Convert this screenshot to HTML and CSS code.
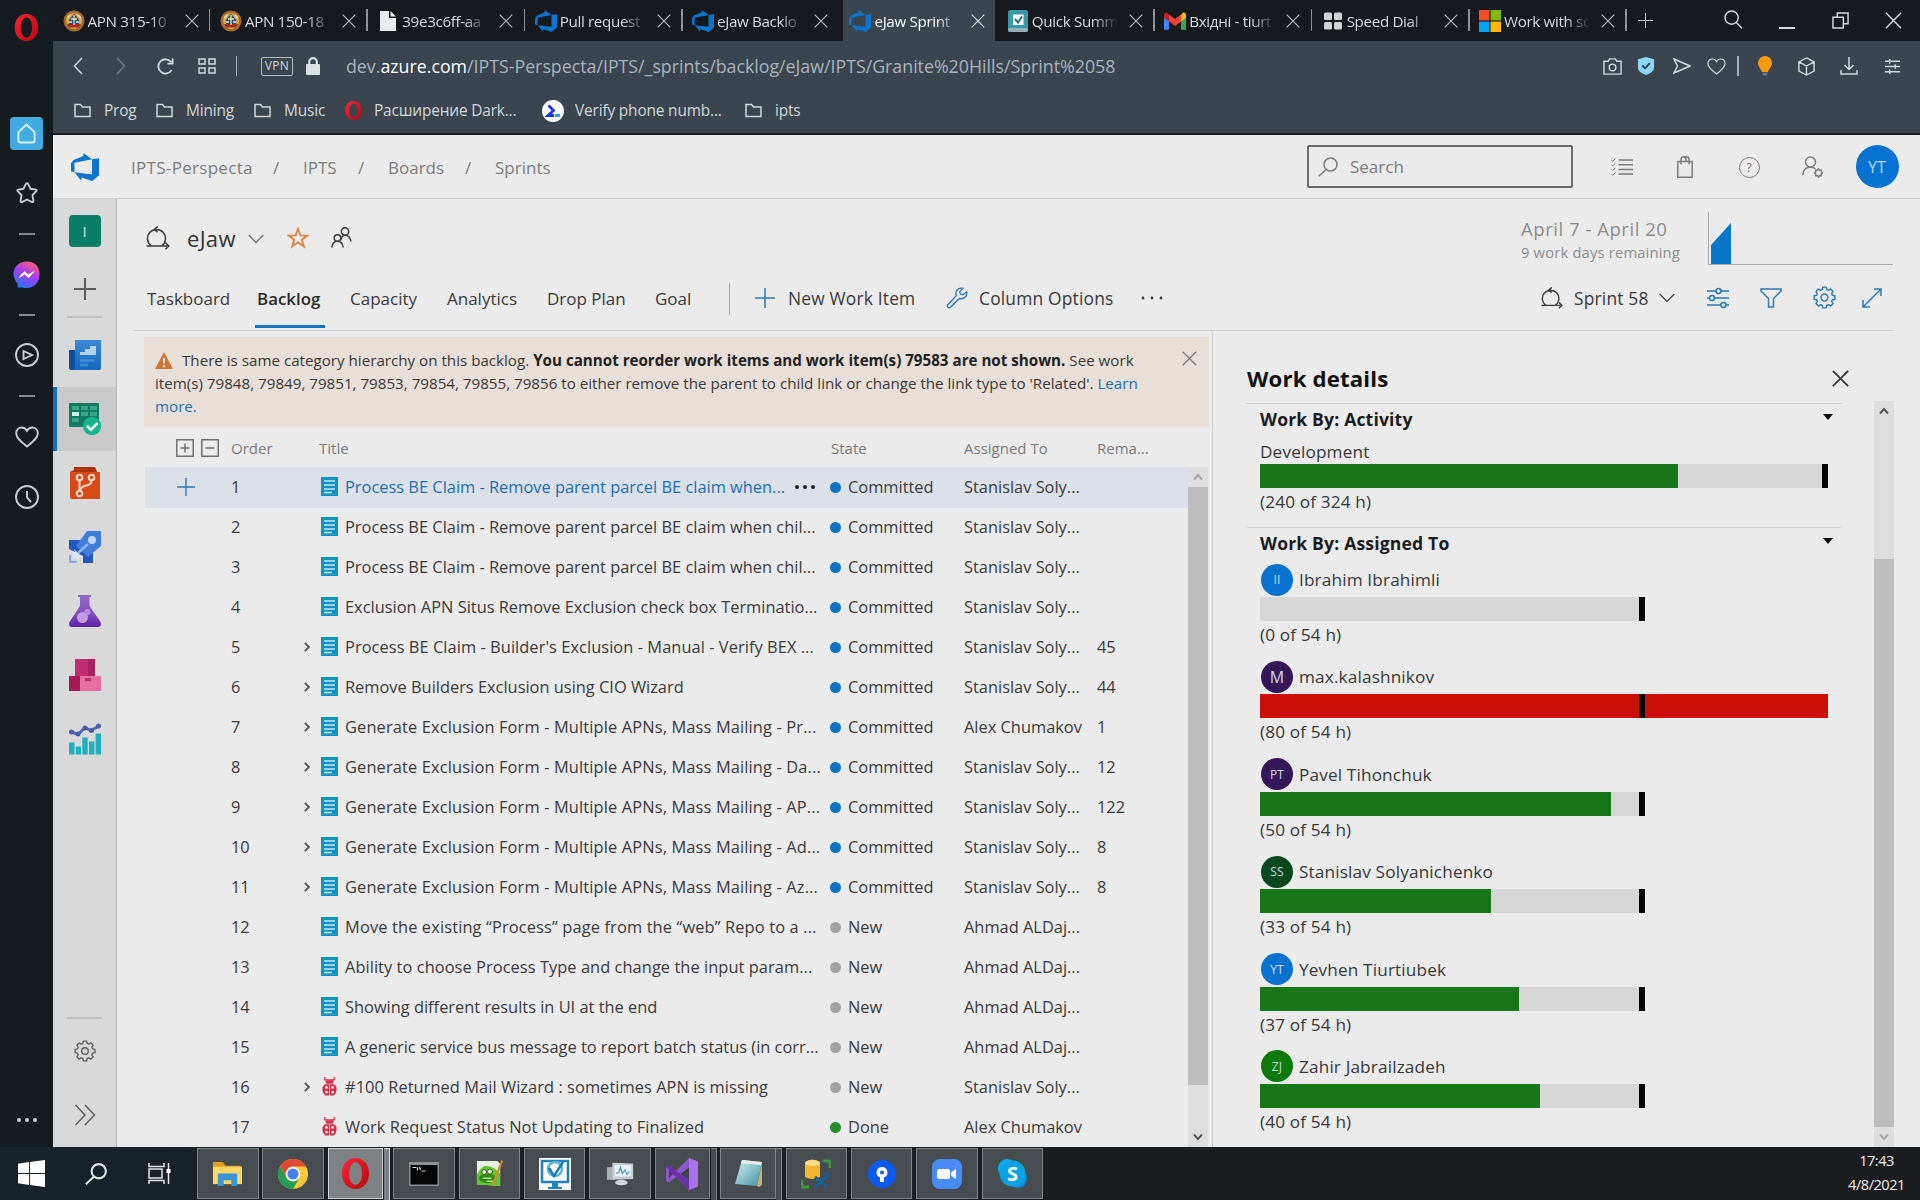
FILE: index.html
```html
<!DOCTYPE html>
<html lang="en">
<head>
<meta charset="utf-8">
<title>eJaw Sprint 58 - Backlog</title>
<link rel="stylesheet" href="styles.css">
</head>
<body>
<svg class="sprite" aria-hidden="true">
  <defs>
    <linearGradient id="g-msg" x1="0.7" y1="0" x2="0.2" y2="1"><stop offset="0" stop-color="#ff5f72"/><stop offset=".45" stop-color="#a63cf5"/><stop offset="1" stop-color="#1a7bff"/></linearGradient>
    <linearGradient id="g-opera" x1="0" y1="0" x2="1" y2="1"><stop offset="0" stop-color="#ff2534"/><stop offset="1" stop-color="#b30713"/></linearGradient>
    <linearGradient id="g-overview" x1="0" y1="0" x2="0" y2="1"><stop offset="0" stop-color="#3c8ad6"/><stop offset="1" stop-color="#1365bd"/></linearGradient>
    <linearGradient id="g-flask" x1="0" y1="0" x2="0" y2="1"><stop offset="0" stop-color="#9468c4"/><stop offset=".55" stop-color="#8250c4"/><stop offset="1" stop-color="#5b20a5"/></linearGradient>
    <linearGradient id="g-note" x1="0" y1="0" x2="1" y2="1"><stop offset="0" stop-color="#d5f1f5"/><stop offset="1" stop-color="#3f93a4"/></linearGradient>
    <symbol id="opera" viewBox="0 0 24 24"><path fill="url(#g-opera)" fill-rule="evenodd" d="M12 0C5.600 0 1.500 5.400 1.500 12S5.600 24 12 24 22.500 18.600 22.500 12 18.400 0 12 0zm0 3.200c3.100 0 5 3.900 5 8.800s-1.900 8.800-5 8.800S7 16.900 7 12s1.900-8.800 5-8.800z"/></symbol>
    <symbol id="devops" viewBox="0 0 24 24"><path fill="#0c74cc" d="M0 8.877L2.247 5.910l8.405-3.416V.022l7.370 5.393L2.966 8.338v8.225L0 15.707zm24-4.450v14.651l-5.753 4.900-9.303-3.057v3.056l-5.978-7.416 15.057 1.798V5.415z"/></symbol>
    <symbol id="x" viewBox="0 0 14 14"><path d="M.7.700l12.600 12.600M13.300.700L.7 13.300"/></symbol>
    <symbol id="plus" viewBox="0 0 20 20"><path d="M10 0v20M0 10h20"/></symbol>
    <symbol id="seal" viewBox="0 0 22 22"><circle cx="11" cy="11" r="10.500" fill="#a36b2c"/><circle cx="11" cy="11" r="8" fill="#d9a441"/><path d="M11 3.500l5 6.500v4H6v-4z" fill="#1f4d8e"/><path d="M4 14h14l-2 3.500H6z" fill="#a52c22"/><path d="M11 5v10M8 9h6M6 12h3M13 12h3" stroke="#f6e7a8" stroke-width="1.300"/><path d="M4 8l3-3M18 8l-3-3" stroke="#fff3c0" stroke-width="1.200"/></symbol>
    <symbol id="file" viewBox="0 0 18 22"><path d="M1 1h9v7h7v13H1z" fill="#e9ebed"/><path d="M11.500 1L17 6.600h-5.500z" fill="#e9ebed"/></symbol>
    <symbol id="folder" viewBox="0 0 17 14"><path d="M1 1h5.500l2 2.500H16V13H1z"/></symbol>
    <symbol id="home" viewBox="0 0 20 22"><path d="M1.500 9.500L10 1.500l8.500 8V18q0 2.500-2.500 2.500H4Q1.500 20.500 1.500 18z"/></symbol>
    <symbol id="star-r" viewBox="0 0 24 24"><path d="M12 2.200q.8 0 1.200.9l2.300 4.700 5.300.8q1.500.4.500 1.600l-3.800 3.900.9 5.800q0 1.600-1.400 1.100L12 18.500 7 21q-1.400.5-1.400-1.100l.9-5.800-3.800-3.900q-1-1.200.5-1.600l5.300-.8 2.300-4.700q.4-.9 1.200-.9z"/></symbol>
    <symbol id="messenger" viewBox="0 0 28 28"><path fill="url(#g-msg)" d="M14 .5C6.300.500.5 6 .5 13.500c0 4 1.600 7.400 4.300 9.800v4.200h4.700c1.400.4 2.900.5 4.500.5 7.700 0 13.500-5.500 13.500-14.300S21.700.500 14 .5z"/><path d="M6.500 17l5.200-6 4 3.600 5.800-3.600-5.200 6.200-4.100-3.700z" fill="#fff" stroke="#fff" stroke-width="1"/></symbol>
    <symbol id="play" viewBox="0 0 24 24"><circle cx="12" cy="12" r="11"/><path d="M8.500 8l8.500 4-8.500 4z"/></symbol>
    <symbol id="heart" viewBox="0 0 24 22"><path d="M12 20.500C7 16.500 1.200 12.500 1.200 7.300 1.200 3.700 3.700 1.500 6.700 1.500c2.300 0 4.200 1.200 5.300 3.300 1.100-2.100 3-3.300 5.300-3.300 3 0 5.500 2.200 5.500 5.800 0 5.200-5.800 9.200-10.800 13.200z"/></symbol>
    <symbol id="clock" viewBox="0 0 24 24"><circle cx="12" cy="12" r="11"/><path d="M12 6v6.500l4 4.500"/></symbol>
    <symbol id="dots" viewBox="0 0 22 6"><circle cx="3" cy="3" r="2"/><circle cx="11" cy="3" r="2"/><circle cx="19" cy="3" r="2"/></symbol>
    <symbol id="dots-s" viewBox="0 0 22 6"><circle cx="2" cy="3" r="1.400"/><circle cx="11" cy="3" r="1.400"/><circle cx="20" cy="3" r="1.400"/></symbol>
    <symbol id="left" viewBox="0 0 10 18"><path d="M9 1L1.500 9 9 17"/></symbol>
    <symbol id="right" viewBox="0 0 10 18"><path d="M1 1l7.500 8L1 17"/></symbol>
    <symbol id="reload" viewBox="0 0 18 20"><path d="M15.500 13.500A7.500 7.500 0 1 1 15 5.500M16.500 1.500v5.500H11"/></symbol>
    <symbol id="tiles" viewBox="0 0 18 16"><path d="M1 1h6v5H1zM11 1h6v5h-6zM1 10h6v5H1zM11 10h6v5h-6z"/></symbol>
    <symbol id="lock" viewBox="0 0 14 18"><rect x="0" y="7" width="14" height="11" rx="1" fill="#dde1e4"/><path d="M3.200 8V5a3.800 3.800 0 0 1 7.600 0v3" fill="none" stroke="#dde1e4" stroke-width="2.200"/></symbol>
    <symbol id="camera" viewBox="0 0 20 18"><path d="M1 3.500h4.500L7 1h6l1.500 2.500H19V17H1z"/><circle cx="10" cy="10" r="3.500"/></symbol>
    <symbol id="shield" viewBox="0 0 17 19"><path d="M8.500 0L17 2.500V11q0 5-8.500 8Q0 16 0 11V2.500z" fill="#8fd4fb"/><path d="M4.500 9l3 3 5-5.500" fill="none" stroke="#24445c" stroke-width="2"/></symbol>
    <symbol id="send" viewBox="0 0 18 16"><path d="M1 1l16 7-16 7 3.500-7z"/></symbol>
    <symbol id="bulb" viewBox="0 0 15 20"><path d="M7.500 0A7 7 0 0 1 14.500 7c0 4-3 5.500-4 9h-6C3.500 12.500.5 11 .5 7a7 7 0 0 1 7-7z" fill="#f89a0b"/><path d="M5 16.500h5v1.500L8.500 20h-2L5 18z" fill="#6a7480"/></symbol>
    <symbol id="cube" viewBox="0 0 18 20"><path d="M9 1l8 4.200v9.600L9 19l-8-4.200V5.200zM1 5.200l8 4.300 8-4.300M9 9.500V19"/></symbol>
    <symbol id="download" viewBox="0 0 18 18"><path d="M9 0v12M4.500 8L9 12.500 13.500 8M1 13v4h16v-4"/></symbol>
    <symbol id="tune" viewBox="0 0 18 16"><path d="M1 2.500h16M1 8h16M1 13.500h16M6 0v5M12 5.500v5M6 11v5"/></symbol>
    <symbol id="mag" viewBox="0 0 20 20"><circle cx="8" cy="8" r="7"/><path d="M13 13.200l6 6"/></symbol>
    <symbol id="maglight" viewBox="0 0 20 20"><circle cx="12.500" cy="7.500" r="6.500"/><path d="M8 12.500L.8 19.300"/></symbol>
    <symbol id="restore" viewBox="0 0 18 18"><path d="M1 5.500h11V17H1zM5.500 5V1H17v11.500h-4.500"/></symbol>
    <symbol id="gmail" viewBox="0 0 20 16"><path d="M0 2v14h4.500V7.500z" fill="#4285f4"/><path d="M20 2v14h-4.500V7.500z" fill="#34a853"/><path d="M15.500 2.500v6L20 5V2q-.5-2.500-3-1.500z" fill="#fbbc04"/><path d="M4.500 2.500v6L0 5V2Q.5-.5 3 .5z" fill="#c5221f"/><path d="M4.500 2l5.500 4.200L15.500 2v6.500L10 12.500 4.500 8.500z" fill="#ea4335"/></symbol>
    <symbol id="check-tile" viewBox="0 0 20 22"><rect width="20" height="22" rx="2.500" fill="#3b98a8"/><rect y="18" width="20" height="4" rx="2" fill="#8fb4ba"/><rect x="5" y="4.500" width="10.500" height="10.500" fill="#fff"/><path d="M7 9l3 3.500L14 6.500" fill="none" stroke="#246f80" stroke-width="2"/></symbol>
    <symbol id="dial" viewBox="0 0 18 17"><g fill="#d0d3d6"><rect width="8" height="7.500" rx="1.500"/><rect x="10" width="8" height="7.500" rx="1.500"/><rect y="9.500" width="8" height="7.500" rx="1.500"/><rect x="10" y="9.500" width="8" height="7.500" rx="1.500"/></g></symbol>
    <symbol id="ms" viewBox="0 0 20 20"><path d="M0 0h9.500v9.500H0z" fill="#f25022"/><path d="M10.500 0H20v9.500h-9.500z" fill="#7fba00"/><path d="M0 10.500h9.500V20H0z" fill="#00a4ef"/><path d="M10.500 10.500H20V20h-9.500z" fill="#ffb900"/></symbol>
    <symbol id="prompt" viewBox="0 0 22 22"><circle cx="11" cy="11" r="11" fill="#fff"/><path d="M6.500 5.500l5 5L6 15.500h6" fill="none" stroke="#1736e8" stroke-width="2.800"/><path d="M13 15.500h5" stroke="#18a0e8" stroke-width="2.800"/></symbol>
    <symbol id="gear" viewBox="-12 -12 24 24"><path stroke-linejoin="round" d="M8.200-2.400L10.800-1.800V1.800L8.200 2.400 7.500 4.100 8.910 6.360 6.360 8.910 4.100 7.500 2.400 8.200 1.800 10.800H-1.800L-2.400 8.200-4.100 7.500-6.360 8.910-8.910 6.360-7.500 4.100-8.200 2.400-10.800 1.800V-1.800L-8.200-2.400-7.500-4.100-8.910-6.360-6.360-8.910-4.100-7.500-2.400-8.200-1.800-10.800H1.800L2.400-8.200 4.100-7.500 6.360-8.910 8.910-6.360 7.500-4.100z"/><circle r="3.600"/></symbol>
    <symbol id="list" viewBox="0 0 22 18"><path d="M7.500 2H22M7.500 6.700H22M7.500 11.400H22M7.500 16H22"/><path stroke-width="1" d="M.5 2l1.200 1.200L4.500.600M.5 6.700l1.200 1.200L4.500 5.300M.5 11.400l1.200 1.200L4.500 10M.5 16l1.200 1.200 2.800-2.600"/></symbol>
    <symbol id="bag" viewBox="0 0 18 22"><path d="M1.800 5.500h14.400v15.700H1.800zM5 8.500V3.500Q5 .8 7.500.8T10 3.500v2M8.500.800h2Q13 .8 13 3.500v5"/></symbol>
    <symbol id="persongear" viewBox="0 0 22 22"><circle cx="8.500" cy="6" r="5"/><path d="M.8 19Q1.500 11 8.500 11q3 0 5 2"/><circle cx="16.500" cy="17" r="3.200"/><path stroke-width="1.300" d="M16.500 12v2M16.500 20v2M11.800 17h2M19.200 17h2M13.200 13.700l1.200 1.200M18.600 19.100l1.200 1.200M13.200 20.300l1.200-1.200M18.600 14.900l1.200-1.200"/></symbol>
    <symbol id="sprint" viewBox="0 0 24 24"><path d="M5.500 20A9 9 0 1 1 15.500 20M.5 20h21M19.500 16.800l3.300 3.200-3.300 3.200M11.800.500l-3.300 2.700 3 3"/></symbol>
    <symbol id="down" viewBox="0 0 16 10"><path d="M.7 1L8 8.500 15.300 1"/></symbol>
    <symbol id="star" viewBox="0 0 22 22"><path d="M11 2l2.300 6.400 6.900.2-5.400 4.200 2 6.600L11 15.500l-5.800 3.900 2-6.600-5.400-4.200 6.900-.2z"/></symbol>
    <symbol id="people" viewBox="0 0 21 21"><circle cx="14" cy="4.500" r="3.700"/><path d="M10 12.500Q11 8.200 14 8.200q5 0 6 6.300"/><circle cx="6.500" cy="11" r="3.300"/><path d="M.8 20.500Q1.500 14.300 6.500 14.300t5.700 6.200"/></symbol>
    <symbol id="wrench" viewBox="0 0 24 24"><path d="M22.500 5.500l-4 3-2.800-.8L15 5l3.500-3.500Q14.500.500 12 3.500q-2 2.700-.7 6L2 19.300q-1 1.700.3 2.700 1.300 1.300 2.700 0l9.500-9.500q4 1 6.500-1.500 2.300-2.500 1.500-5.500z"/></symbol>
    <symbol id="sliders" viewBox="0 0 22 20"><path d="M0 3h9M14 3h8M0 10h2.500M7.500 10H22M0 17h14M19 17h3"/><circle cx="11.500" cy="3" r="2.500"/><circle cx="5" cy="10" r="2.500"/><circle cx="16.500" cy="17" r="2.500"/></symbol>
    <symbol id="funnel" viewBox="0 0 22 20"><path d="M1 1h20v2l-7.500 7.500V19h-5v-8.500L1 3z"/></symbol>
    <symbol id="expand" viewBox="0 0 20 20"><path d="M1 19L19 1M12 1h7v7M1 12v7h7"/></symbol>
    <symbol id="warn" viewBox="0 0 18 17"><path d="M9 0l9 17H0z" fill="#cf7736"/><path d="M9 6v5.500M9 13.200v2" stroke="#f1e6dc" stroke-width="2"/></symbol>
    <symbol id="pbi" viewBox="0 0 17 19"><path d="M0 0h17v19H0z" fill="#0f92bd"/><path d="M3 4h11M3 8h11M3 12h11M3 15.500h8" stroke="#c4e8f2" stroke-width="1.300"/></symbol>
    <symbol id="bug" viewBox="0 0 16 20"><path d="M3 0v3h10V0" fill="none" stroke="#d23049" stroke-width="1.400"/><path d="M4 3.500h8V7H4z" fill="#d23049"/><path d="M3 7.500h10q2.500 2 2.500 5.500 0 4-3 6.500h-9Q.5 17 .5 13 .5 9.500 3 7.500z" fill="#d23049"/><path d="M8 8v12" stroke="#ebebeb" stroke-width="1"/><g fill="#ebebeb"><circle cx="4.800" cy="11" r="1.400"/><circle cx="11.200" cy="11" r="1.400"/><circle cx="4.800" cy="16" r="1.400"/><circle cx="11.200" cy="16" r="1.400"/></g></symbol>
    <symbol id="twist" viewBox="0 0 6 10"><path d="M.8.800L5 5 .8 9.200"/></symbol>
    <symbol id="boxplus" viewBox="0 0 18 18"><path d="M.8.800h16.400v16.400H.8zM9 4.500v9M4.500 9h9"/></symbol>
    <symbol id="boxminus" viewBox="0 0 18 18"><path d="M.8.800h16.400v16.400H.8zM4.500 9h9"/></symbol>
    <symbol id="up" viewBox="0 0 10 8"><path d="M1 6.500l4-4.500 4 4.500"/></symbol>
    <symbol id="dn" viewBox="0 0 10 8"><path d="M1 1.500L5 6l4-4.500"/></symbol>
    <symbol id="overview" viewBox="0 0 32 30"><path d="M0 10h8v20H2Q0 30 0 28z" fill="#0d5099"/><path d="M6 0h26v28q0 2-2 2H3q3 0 3-3z" fill="url(#g-overview)"/><path d="M11 15v-3h5V9h5V6h6v9z" fill="#b4d3f1"/><path d="M11 20.500h14M11 25h8" stroke="#3f8ad4" stroke-width="2.500"/></symbol>
    <symbol id="boards" viewBox="0 0 32 32"><path d="M0 0h30v22q0 2-2 2H2q-2 0-2-2z" fill="#117a61"/><g fill="#3ba687"><path d="M3 3h7v4H3zM12 3h7v4h-7zM21 3h7v4h-7zM12 9h7v4h-7zM21 9h7v4h-7zM3 15h7v4H3z"/></g><path d="M3 9h7v4H3z" fill="#d1f3e7"/><circle cx="23" cy="23" r="9.200" fill="#18b68d"/><path d="M18 23l4 3.800 6.500-6.600" fill="none" stroke="#fff" stroke-width="2.500"/></symbol>
    <symbol id="repos" viewBox="0 0 30 32"><path d="M4 0h21l2 5h3H0l4-2z" fill="#a8330c"/><path d="M0 5h30v27H2q-2 0-2-2z" fill="#d84a17"/><g fill="none" stroke="#ffd9c7" stroke-width="2"><circle cx="9.500" cy="10.500" r="2.800"/><circle cx="21.500" cy="10.500" r="2.800"/><circle cx="9.500" cy="26.500" r="2.800"/><path d="M9.500 13.500v10.500M21.500 13.500q0 4-5 5t-7 5"/></g></symbol>
    <symbol id="pipelines" viewBox="0 0 32 32"><path d="M0 9h12l12 11v12H14v-7L0 18z" fill="#2457bd"/><path d="M18 0h14v15L19 26 7 15z" fill="#3f7ddd"/><circle cx="23" cy="9" r="4" fill="#c2d6f6"/><path d="M9 22L19 13" stroke="#8db3ef" stroke-width="2.500"/><path d="M5 18l9 9-4-1-1 3-3-3-3 1 2-3-3-3 4 0z" fill="#dce7f8"/><path d="M1 24v7h7" fill="none" stroke="#8ba8e3" stroke-width="2.500"/></symbol>
    <symbol id="flask" viewBox="0 0 32 32"><path d="M9 0h13v2h-1.500v9L31.500 27q1.500 5-3 5h-25Q-1 32 .5 27l10.500-16V2H9z" fill="url(#g-flask)"/><circle cx="13.500" cy="22.500" r="5.500" fill="#c59de6"/><circle cx="18.500" cy="17" r="3" fill="#b88be0"/></symbol>
    <symbol id="artifacts" viewBox="0 0 32 32"><path d="M6 0h20v17H6z" fill="#c02d74"/><path d="M19 0h7v17h-7z" fill="#ab2063"/><path d="M0 17h11v15H0z" fill="#a81857"/><path d="M11 17h21v15H11z" fill="#e5709f"/><path d="M16 19h6v3h-6z" fill="#b73372"/></symbol>
    <symbol id="analytics" viewBox="0 0 32 31"><g fill="#1fb0bd"><path d="M0 19h5.500v12H0zM6.700 23H12v8H6.700zM13.300 14h5.400v17h-5.400zM20 18h5.400v13H20zM26.600 10H32v21h-5.400z"/></g><path d="M1.500 8l7.500 3 7-7 6 3 8.500-5" fill="none" stroke="#5168b4" stroke-width="3"/><g fill="#4a5ca6"><circle cx="2.500" cy="8.500" r="2.500"/><circle cx="9" cy="10.500" r="2.500"/><circle cx="16" cy="4.500" r="2.500"/><circle cx="22.500" cy="7" r="2.500"/><circle cx="29.500" cy="2.500" r="2.500"/></g></symbol>
    <symbol id="chevrons" viewBox="0 0 22 22"><path d="M1.500 1l9.500 10-9.500 10M11 1l9.500 10L11 21"/></symbol>
    <symbol id="win" viewBox="0 0 28 28"><path fill="#fff" d="M0 4l11.500-1.800v11.300H0zM12.500 2L28 0v13.500H12.500zM0 14.500h11.500v11.300L0 24.200zM12.500 14.500H28V28l-15.500-2z"/></symbol>
    <symbol id="taskview" viewBox="0 0 23 21"><path d="M1 0v3.500h15V0M1 21v-3.500h15V21M1 6h13v9H1zM20.500 0v21"/><path fill="#fff" d="M18.500 6h4v4h-4z" stroke="none"/></symbol>
    <symbol id="explorer" viewBox="0 0 32 28"><path d="M1 2h10l3 4h16v18H1z" fill="#e0a020"/><path d="M1 7h30v18H1z" fill="#fbd766"/><path d="M7 14h18q1 0 1 1v12h-6v-6h-8v6H6V15q0-1 1-1z" fill="#3994d8"/></symbol>
    <symbol id="chrome" viewBox="0 0 30 30"><circle cx="15" cy="15" r="15" fill="#fcc934"/><path d="M2 7.500A15 15 0 0 1 28 7.500H15a7.500 7.500 0 0 0-6.500 11.200z" fill="#e0483a"/><path d="M2 7.500A15 15 0 0 0 15 30l6.500-11.300A7.500 7.500 0 0 1 8.500 18.700z" fill="#219c52"/><circle cx="15" cy="15" r="7.200" fill="#fff"/><circle cx="15" cy="15" r="5.600" fill="#4380ea"/></symbol>
    <symbol id="cmd" viewBox="0 0 30 24"><path d="M0 0h30v24H0z" fill="#8b9092"/><path d="M1.500 3h27v19.500h-27z" fill="#050505"/><path d="M3.500 5.500h4M8.500 5.500v3M10.500 5l1 3M12.500 9h4" stroke="#ddd" stroke-width="1.200"/></symbol>
    <symbol id="npp" viewBox="0 0 30 30"><path d="M2 2h21l3 3v23L2 26z" fill="#e8f0e0"/><path d="M2 16q5-9 10-9 8 1 14 8v13L2 26z" fill="#63c52e"/><ellipse cx="13" cy="20" rx="9" ry="5" fill="#2f8a18"/><circle cx="9.500" cy="13.500" r="2.600" fill="#dfe8d2" stroke="#2b6b18"/><circle cx="15.500" cy="13" r="2.600" fill="#dfe8d2" stroke="#2b6b18"/><path d="M8 20h9M12 23h8" stroke="#a5e57c" stroke-width="1.500"/><path d="M29 2L20 26l-2 2 0-3L27 1z" fill="#d68a31"/></symbol>
    <symbol id="monitorcheck" viewBox="0 0 32 32"><path d="M0 0h32v32H0z" fill="#fff"/><path d="M3 3h26v21H3z" fill="none" stroke="#2184b7" stroke-width="2.600"/><circle cx="16" cy="11" r="7" fill="none" stroke="#57b4dc" stroke-width="2.500"/><path d="M10 10l5 8 9-14" fill="none" stroke="#1d7db3" stroke-width="2.500"/><path d="M13 24h6v5h4v2H9v-2h4z" fill="#2184b7"/></symbol>
    <symbol id="sysmon" viewBox="0 0 32 26"><path d="M1 6h9v14H1z" fill="#aab0b4"/><path d="M7 1l23 1v17l-23 1z" fill="#c7cccf"/><path d="M9.500 3.500l18 .5v12l-18 .5z" fill="#eaf3fa"/><path d="M11 13l3-1 2-6 2 7 3-4 2 5 3-3" fill="none" stroke="#4f94c9" stroke-width="1.300"/><ellipse cx="17" cy="23" rx="7" ry="3" fill="#d5d8da"/></symbol>
    <symbol id="vs" viewBox="0 0 32 32"><path d="M23 0l9 3.500v25L23 32 10 19l-7 5.500L0 23V9l3-1.500 7 5.500z" fill="#9256cf"/><path d="M3 12v8l4-4zM23 9.500v13L14.500 16z" fill="#41434a"/><path d="M23 0l9 3.500v25L23 32z" fill="#a873ea"/><path d="M0 9l3-1.500 7 5.500 4.500 3 8.500 6.500V32L10 19z" fill="#6b31ab"/></symbol>
    <symbol id="notepad" viewBox="0 0 28 28"><path d="M8 0l20 2-5 24-22-2z" fill="url(#g-note)"/><path d="M8 0l20 2-.7 3L7 3z" fill="#e8edee"/><path d="M28 3v22l-3 2-2-1z" fill="#cfae73"/></symbol>
    <symbol id="dbtool" viewBox="0 0 30 30"><path d="M4 3q7-5 15 0v15q-8 4-15 0z" fill="#f4b62c"/><ellipse cx="11.500" cy="4" rx="7.500" ry="3" fill="#ffe08a"/><path d="M22 2h7v7M8 28H1v-7" fill="none" stroke="#3d9a43" stroke-width="2.800"/><path d="M14 28l12-11M14 18l12 10M24 14l5 4" stroke="#1f5f94" stroke-width="3"/></symbol>
    <symbol id="sourcetree" viewBox="0 0 28 28"><circle cx="14" cy="14" r="14" fill="#0b58f2"/><path d="M14 7a5.500 5.500 0 0 1 2 10.600V22h-4v-4.400A5.500 5.500 0 0 1 14 7z" fill="#fff"/><circle cx="14" cy="12.500" r="2" fill="#0b58f2"/></symbol>
    <symbol id="zoomapp" viewBox="0 0 30 30"><rect width="30" height="30" rx="8" fill="#4a8cf7"/><rect x="5" y="10" width="13" height="10" rx="2.500" fill="#fff"/><path d="M19 13.500l5-3.500v10l-5-3.500z" fill="#fff"/></symbol>
    <symbol id="skype" viewBox="0 0 28 28"><circle cx="9" cy="9" r="9" fill="#00aff0"/><circle cx="19" cy="19" r="9" fill="#0a8fd8"/><circle cx="14" cy="14" r="12.500" fill="#08a1e3"/></symbol>
  </defs>
</svg>

<div class="desktop">
  <div class="browser">
    <aside class="opera-bar">
      <svg class="logo26"><use href="#opera"/></svg>
      <span></span>
      <span class="home-tile"><svg class="line w2 home-ico"><use href="#home"/></svg></span>
      <svg class="line w2 s24"><use href="#star-r"/></svg>
      <i class="dash"></i>
      <svg class="s27"><use href="#messenger"/></svg>
      <i class="dash"></i>
      <svg class="line w2 s24"><use href="#play"/></svg>
      <i class="dash"></i>
      <svg class="line w2 s24"><use href="#heart"/></svg>
      <svg class="line w2 s24"><use href="#clock"/></svg>
      <span></span>
      <svg class="solid dots22"><use href="#dots"/></svg>
    </aside>

    <div class="window">
      <div class="tabstrip">
        <div class="tab"><svg class="fav"><use href="#seal"/></svg><span>APN 315-10</span><svg class="line tx"><use href="#x"/></svg></div>
        <div class="tab"><svg class="fav"><use href="#seal"/></svg><span>APN 150-18</span><svg class="line tx"><use href="#x"/></svg></div>
        <div class="tab"><svg class="fav"><use href="#file"/></svg><span>39e3c6ff-aa</span><svg class="line tx"><use href="#x"/></svg></div>
        <div class="tab"><svg class="fav"><use href="#devops"/></svg><span>Pull request</span><svg class="line tx"><use href="#x"/></svg></div>
        <div class="tab nosep"><svg class="fav"><use href="#devops"/></svg><span>eJaw Backlo</span><svg class="line tx"><use href="#x"/></svg></div>
        <div class="tab active"><svg class="fav"><use href="#devops"/></svg><span>eJaw Sprint</span><svg class="line tx"><use href="#x"/></svg></div>
        <div class="tab"><svg class="fav"><use href="#check-tile"/></svg><span>Quick Summ</span><svg class="line tx"><use href="#x"/></svg></div>
        <div class="tab"><svg class="fav"><use href="#gmail"/></svg><span>Вхідні - tiurt</span><svg class="line tx"><use href="#x"/></svg></div>
        <div class="tab"><svg class="fav dialfav"><use href="#dial"/></svg><span>Speed Dial</span><svg class="line tx"><use href="#x"/></svg></div>
        <div class="tab"><svg class="fav"><use href="#ms"/></svg><span>Work with so</span><svg class="line tx"><use href="#x"/></svg></div>
        <div class="win-btns">
          <svg class="line s14"><use href="#plus"/></svg>
          <svg class="line w15 s19 find"><use href="#mag"/></svg>
          <i class="min"></i>
          <svg class="line w15 s17"><use href="#restore"/></svg>
          <svg class="line s16"><use href="#x"/></svg>
        </div>
      </div>

      <div class="toolbar">
        <div class="address">
          <svg class="line w15 nav"><use href="#left"/></svg>
          <svg class="line w15 nav dim"><use href="#right"/></svg>
          <svg class="line w2 s19"><use href="#reload"/></svg>
          <svg class="line w15 s18"><use href="#tiles"/></svg>
          <i class="vbar"></i>
          <b class="vpn">VPN</b>
          <svg class="s18"><use href="#lock"/></svg>
          <div class="url">dev.<em>azure.com</em>/IPTS-Perspecta/IPTS/_sprints/backlog/eJaw/IPTS/Granite%20Hills/Sprint%2058</div>
          <svg class="line w15 s19"><use href="#camera"/></svg>
          <svg class="s18"><use href="#shield"/></svg>
          <svg class="line w15 s18"><use href="#send"/></svg>
          <svg class="line w15 s19"><use href="#heart"/></svg>
          <i class="vbar"></i>
          <svg class="s20"><use href="#bulb"/></svg>
          <svg class="line w15 s19"><use href="#cube"/></svg>
          <svg class="line w15 s18"><use href="#download"/></svg>
          <svg class="line w15 s17"><use href="#tune"/></svg>
        </div>
        <div class="bookmarks">
          <svg class="line w15 s17"><use href="#folder"/></svg><span>Prog</span>
          <svg class="line w15 s17"><use href="#folder"/></svg><span>Mining</span>
          <svg class="line w15 s17"><use href="#folder"/></svg><span>Music</span>
          <svg class="s19"><use href="#opera"/></svg><span>Расширение Dark...</span>
          <svg class="s22"><use href="#prompt"/></svg><span>Verify phone numb...</span>
          <svg class="line w15 s17"><use href="#folder"/></svg><span>ipts</span>
        </div>
      </div>

      <div class="page">
        <header class="az-header">
          <svg class="s28"><use href="#devops"/></svg>
          <span>IPTS-Perspecta</span><span>/</span><span>IPTS</span><span>/</span><span>Boards</span><span>/</span><span>Sprints</span>
          <div class="search"><svg class="line w15 s20"><use href="#maglight"/></svg>Search</div>
          <span></span>
          <svg class="line w15 hi s22"><use href="#list"/></svg>
          <svg class="line w15 hi s22"><use href="#bag"/></svg>
          <span class="help">?</span>
          <svg class="line w15 hi s22"><use href="#persongear"/></svg>
          <span class="me">YT</span>
        </header>

        <div class="body">
          <nav class="rail">
            <div class="slot"><span class="proj">I</span></div>
            <div class="slot add"><svg class="line w2 s22"><use href="#plus"/></svg></div>
            <div class="rule"></div>
            <div class="slot"><svg class="s32"><use href="#overview"/></svg></div>
            <div class="slot on"><svg class="s32"><use href="#boards"/></svg></div>
            <div class="slot"><svg class="s32"><use href="#repos"/></svg></div>
            <div class="slot"><svg class="s32"><use href="#pipelines"/></svg></div>
            <div class="slot"><svg class="s32"><use href="#flask"/></svg></div>
            <div class="slot"><svg class="s32"><use href="#artifacts"/></svg></div>
            <div class="slot"><svg class="s32"><use href="#analytics"/></svg></div>
            <div class="grow"></div>
            <div class="rule end"></div>
            <div class="slot"><svg class="line w15 s22"><use href="#gear"/></svg></div>
            <div class="slot"><svg class="line w15 s22"><use href="#chevrons"/></svg></div>
          </nav>

          <main class="hub">
            <div class="title-row">
              <svg class="line w15 s24"><use href="#sprint"/></svg>
              <h1>eJaw</h1>
              <svg class="line w15 chev"><use href="#down"/></svg>
              <svg class="line w2 orange s22"><use href="#star"/></svg>
              <svg class="line w15 s21"><use href="#people"/></svg>
              <div class="dates"><strong>April 7 - April 20</strong><small>9 work days remaining</small></div>
              <svg class="burn" viewBox="0 0 185 54"><path d="M.5 0v52.500H185" fill="none" stroke="#a9a9a9"/><path d="M3 33L23 11v41H3z" fill="#0a76c8"/></svg>
            </div>
            <div class="command-row">
              <span>Taskboard</span><span class="current">Backlog</span><span>Capacity</span><span>Analytics</span><span>Drop Plan</span><span>Goal</span>
              <i class="split"></i>
              <svg class="line blue w15 s20"><use href="#plus"/></svg><span class="cmd">New Work Item</span>
              <svg class="line blue w15 s22"><use href="#wrench"/></svg><span class="cmd">Column Options</span>
              <svg class="solid dots22"><use href="#dots-s"/></svg>
              <svg class="line w15 s22"><use href="#sprint"/></svg><span class="cmd">Sprint 58</span>
              <svg class="line chev"><use href="#down"/></svg>
              <svg class="line blue w15 s22"><use href="#sliders"/></svg>
              <svg class="line blue w15 s22"><use href="#funnel"/></svg>
              <svg class="line blue w15 s23"><use href="#gear"/></svg>
              <svg class="line blue w15 s20"><use href="#expand"/></svg>
            </div>

            <div class="split-view">
              <section class="backlog">
                <div class="warning">
                  <p><svg class="warn-ico"><use href="#warn"/></svg>There is same category hierarchy on this backlog. <b>You cannot reorder work items and work item(s) 79583 are not shown.</b> See work<br>item(s) 79848, 79849, 79851, 79853, 79854, 79855, 79856 to either remove the parent to child link or change the link type to 'Related'. <a>Learn</a><br><a>more.</a></p>
                  <svg class="line s15"><use href="#x"/></svg>
                </div>
                <div class="cols">
                  <span class="tog"><svg class="line w15 s18"><use href="#boxplus"/></svg><svg class="line w15 s18"><use href="#boxminus"/></svg></span>
                  <span>Order</span><span>Title</span><span>State</span><span>Assigned To</span><span>Rema...</span>
                </div>
                <div class="grid">
                  <div class="rows">
                    <div class="row sel"><svg class="line blue w15 add18"><use href="#plus"/></svg><span>1</span><i></i><svg class="wi"><use href="#pbi"/></svg><span class="t">Process BE Claim - Remove parent parcel BE claim when...<svg class="solid more"><use href="#dots"/></svg></span><span class="st committed">Committed</span><span>Stanislav Soly...</span><span></span></div>
                    <div class="row"><i></i><span>2</span><i></i><svg class="wi"><use href="#pbi"/></svg><span class="t">Process BE Claim - Remove parent parcel BE claim when chil...</span><span class="st committed">Committed</span><span>Stanislav Soly...</span><span></span></div>
                    <div class="row"><i></i><span>3</span><i></i><svg class="wi"><use href="#pbi"/></svg><span class="t">Process BE Claim - Remove parent parcel BE claim when chil...</span><span class="st committed">Committed</span><span>Stanislav Soly...</span><span></span></div>
                    <div class="row"><i></i><span>4</span><i></i><svg class="wi"><use href="#pbi"/></svg><span class="t">Exclusion APN Situs Remove Exclusion check box Terminatio...</span><span class="st committed">Committed</span><span>Stanislav Soly...</span><span></span></div>
                    <div class="row"><i></i><span>5</span><svg class="line w2 tw"><use href="#twist"/></svg><svg class="wi"><use href="#pbi"/></svg><span class="t mid">Process BE Claim - Builder's Exclusion - Manual - Verify BEX ...</span><span class="st committed">Committed</span><span>Stanislav Soly...</span><span>45</span></div>
                    <div class="row"><i></i><span>6</span><svg class="line w2 tw"><use href="#twist"/></svg><svg class="wi"><use href="#pbi"/></svg><span class="t">Remove Builders Exclusion using CIO Wizard</span><span class="st committed">Committed</span><span>Stanislav Soly...</span><span>44</span></div>
                    <div class="row"><i></i><span>7</span><svg class="line w2 tw"><use href="#twist"/></svg><svg class="wi"><use href="#pbi"/></svg><span class="t wide">Generate Exclusion Form - Multiple APNs, Mass Mailing - Pr...</span><span class="st committed">Committed</span><span>Alex Chumakov</span><span>1</span></div>
                    <div class="row"><i></i><span>8</span><svg class="line w2 tw"><use href="#twist"/></svg><svg class="wi"><use href="#pbi"/></svg><span class="t wide">Generate Exclusion Form - Multiple APNs, Mass Mailing - Da...</span><span class="st committed">Committed</span><span>Stanislav Soly...</span><span>12</span></div>
                    <div class="row"><i></i><span>9</span><svg class="line w2 tw"><use href="#twist"/></svg><svg class="wi"><use href="#pbi"/></svg><span class="t wide">Generate Exclusion Form - Multiple APNs, Mass Mailing - AP...</span><span class="st committed">Committed</span><span>Stanislav Soly...</span><span>122</span></div>
                    <div class="row"><i></i><span>10</span><svg class="line w2 tw"><use href="#twist"/></svg><svg class="wi"><use href="#pbi"/></svg><span class="t wide">Generate Exclusion Form - Multiple APNs, Mass Mailing - Ad...</span><span class="st committed">Committed</span><span>Stanislav Soly...</span><span>8</span></div>
                    <div class="row"><i></i><span>11</span><svg class="line w2 tw"><use href="#twist"/></svg><svg class="wi"><use href="#pbi"/></svg><span class="t wide">Generate Exclusion Form - Multiple APNs, Mass Mailing - Az...</span><span class="st committed">Committed</span><span>Stanislav Soly...</span><span>8</span></div>
                    <div class="row"><i></i><span>12</span><i></i><svg class="wi"><use href="#pbi"/></svg><span class="t wide">Move the existing “Process” page from the “web” Repo to a ...</span><span class="st">New</span><span>Ahmad ALDaj...</span><span></span></div>
                    <div class="row"><i></i><span>13</span><i></i><svg class="wi"><use href="#pbi"/></svg><span class="t mid">Ability to choose Process Type and change the input param...</span><span class="st">New</span><span>Ahmad ALDaj...</span><span></span></div>
                    <div class="row"><i></i><span>14</span><i></i><svg class="wi"><use href="#pbi"/></svg><span class="t">Showing different results in UI at the end</span><span class="st">New</span><span>Ahmad ALDaj...</span><span></span></div>
                    <div class="row"><i></i><span>15</span><i></i><svg class="wi"><use href="#pbi"/></svg><span class="t">A generic service bus message to report batch status (in corr...</span><span class="st">New</span><span>Ahmad ALDaj...</span><span></span></div>
                    <div class="row"><i></i><span>16</span><svg class="line w2 tw"><use href="#twist"/></svg><svg class="wi"><use href="#bug"/></svg><span class="t mid">#100 Returned Mail Wizard : sometimes APN is missing</span><span class="st">New</span><span>Stanislav Soly...</span><span></span></div>
                    <div class="row"><i></i><span>17</span><i></i><svg class="wi"><use href="#bug"/></svg><span class="t mid">Work Request Status Not Updating to Finalized</span><span class="st done">Done</span><span>Alex Chumakov</span><span></span></div>
                  </div>
                  <div class="scroll"><svg class="line w2 arr faint"><use href="#up"/></svg><i class="thumb-a"></i><svg class="line w2 arr bottom"><use href="#dn"/></svg></div>
                </div>
              </section>

              <aside class="details">
                <div class="details-head"><h2>Work details</h2><svg class="line w15 s17"><use href="#x"/></svg></div>
                <div class="details-body">
                  <div class="groups">
                    <section class="group first">
                      <h3>Work By: Activity<i class="caret"></i></h3>
                      <div class="label">Development</div>
                      <div class="bar" style="width:568px"><i class="ok" style="width:417.500px"></i><i class="cap" style="left:562px"></i></div>
                      <div class="hours">(240 of 324 h)</div>
                    </section>
                    <section class="group">
                      <h3>Work By: Assigned To<i class="caret"></i></h3>
                      <div class="person"><div class="who"><b class="c-blue">II</b>Ibrahim Ibrahimli</div><div class="bar"><i class="cap"></i></div><div class="hours">(0 of 54 h)</div></div>
                      <div class="person"><div class="who"><b class="c-purple big">M</b>max.kalashnikov</div><div class="bar" style="width:568px"><i class="over" style="width:568px"></i><i class="cap"></i></div><div class="hours">(80 of 54 h)</div></div>
                      <div class="person"><div class="who"><b class="c-purple">PT</b>Pavel Tihonchuk</div><div class="bar"><i class="ok" style="width:350.500px"></i><i class="cap"></i></div><div class="hours">(50 of 54 h)</div></div>
                      <div class="person"><div class="who"><b class="c-dgreen">SS</b>Stanislav Solyanichenko</div><div class="bar"><i class="ok" style="width:231px"></i><i class="cap"></i></div><div class="hours">(33 of 54 h)</div></div>
                      <div class="person"><div class="who"><b class="c-blue">YT</b>Yevhen Tiurtiubek</div><div class="bar"><i class="ok" style="width:258.500px"></i><i class="cap"></i></div><div class="hours">(37 of 54 h)</div></div>
                      <div class="person"><div class="who"><b class="c-green">ZJ</b>Zahir Jabrailzadeh</div><div class="bar"><i class="ok" style="width:280px"></i><i class="cap"></i></div><div class="hours">(40 of 54 h)</div></div>
                    </section>
                  </div>
                  <div class="scroll"><svg class="line w2 arr"><use href="#up"/></svg><i class="thumb-b"></i><svg class="line w2 arr bottom faint"><use href="#dn"/></svg></div>
                </div>
              </aside>
            </div>
          </main>
        </div>
      </div>
    </div>
  </div>

  <footer class="taskbar">
    <svg class="s27"><use href="#win"/></svg>
    <svg class="line w2 s22"><use href="#maglight"/></svg>
    <svg class="line w15 s23"><use href="#taskview"/></svg>
    <div class="apps">
      <div class="app"><svg class="s31"><use href="#explorer"/></svg></div>
      <div class="app"><svg class="s30"><use href="#chrome"/></svg></div>
      <div class="app multi focus"><svg class="s31"><use href="#opera"/></svg></div>
      <div class="app"><svg class="s30"><use href="#cmd"/></svg></div>
      <div class="app"><svg class="s29"><use href="#npp"/></svg></div>
      <div class="app"><svg class="s32"><use href="#monitorcheck"/></svg></div>
      <div class="app"><svg class="s29"><use href="#sysmon"/></svg></div>
      <div class="app multi"><svg class="s32"><use href="#vs"/></svg></div>
      <div class="app multi"><svg class="s28"><use href="#notepad"/></svg></div>
      <div class="app"><svg class="s30"><use href="#dbtool"/></svg></div>
      <div class="app"><svg class="s28"><use href="#sourcetree"/></svg></div>
      <div class="app"><svg class="s30"><use href="#zoomapp"/></svg></div>
      <div class="app"><svg class="s29"><use href="#skype"/></svg><b class="skype-s">S</b></div>
    </div>
    <div class="tray"><span>17:43</span><span>4/8/2021</span></div>
  </footer>
</div>
</body>
</html>
```

FILE: styles.css
```css
* { box-sizing: border-box; }
body {
  margin: 0;
  width: 1920px;
  height: 1200px;
  overflow: hidden;
  font-family: "Open Sans", "Noto Sans", sans-serif;
  font-size: 16.4px;
  color: #3a3a3a;
  background: #161a1e;
}
h1, h2, h3, p { margin: 0; font-weight: 400; }
i, em { font-style: normal; }
svg { display: block; flex: none; }
.sprite { position: absolute; width: 0; height: 0; }

/* icon helpers */
.line { fill: none; stroke: currentColor; stroke-width: 1.2; }
.solid { fill: currentColor; }
.w15 { stroke-width: 1.5; }
.w2 { stroke-width: 1.9; }
.s14 { width: 15px; height: 15px; }
.s15 { width: 15px; height: 15px; }
.s16 { width: 17px; height: 17px; }
.s17 { width: 17px; height: 17px; }
.s18 { width: 18px; height: 18px; }
.s19 { width: 19px; height: 19px; }
.s20 { width: 20px; height: 20px; }
.s21 { width: 21px; height: 21px; }
.s22 { width: 22px; height: 22px; }
.s23 { width: 23px; height: 23px; }
.s24 { width: 24px; height: 24px; }
.s27 { width: 27px; height: 27px; }
.s28 { width: 28px; height: 28px; }
.s29 { width: 29px; height: 29px; }
.s30 { width: 30px; height: 30px; }
.s31 { width: 31px; height: 31px; }
.s32 { width: 32px; height: 32px; }
.blue { color: #2b78b8; }
.orange { color: #db8548; }
.dots22 { width: 22px; height: 6px; }
.chev { width: 16px; height: 10px; }

.desktop { display: flex; flex-direction: column; height: 1200px; }
.browser { display: flex; height: 1147px; }

/* Opera side bar */
.opera-bar {
  width: 53px;
  display: grid;
  grid-template-rows: 54px 49px 60px 60px 22px 59px 22px 58px 24px 57px 64px 1fr 54px;
  place-items: center;
  background: #161b20;
  color: #c9ccd0;
}
.logo26 { width: 27px; height: 27px; }
.home-tile { width: 33px; height: 33px; border-radius: 4px; background: #44aae2; display: grid; place-items: center; color: #d9f2ff; }
.home-ico { width: 19px; height: 21px; }
.dash { width: 16px; height: 2px; background: #878b8f; }

.window { width: 1867px; display: flex; flex-direction: column; }

/* tabs */
.tabstrip { height: 41px; display: flex; background: #161a1e; color: #d8dadd; }
.tab { position: relative; width: 157.400px; padding-left: 9.500px; display: flex; align-items: center; font-size: 15.200px; }
.tab::after { content: ""; position: absolute; right: 0; top: 9px; width: 1.500px; height: 22px; background: #8b9197; }
.tab.nosep::after, .tab.active::after { display: none; }
.tab.active { width: 151.500px; margin: 0 2.400px 0 3.500px; padding-left: 6px; background: #3a454f; color: #fff; }
.fav { width: 22px; height: 22px; }
.dialfav { width: 18px; height: 18px; margin-left: 2px; }
.tab .dialfav + span { margin-left: 5px; width: 89px; }
.tab span { margin-left: 3px; width: 89px; overflow: hidden; white-space: nowrap; letter-spacing: -.35px; -webkit-mask-image: linear-gradient(90deg, #000 70%, transparent 97%); mask-image: linear-gradient(90deg, #000 70%, transparent 97%); }
.tx { width: 14px; height: 14px; margin-left: 8px; color: #b5b8bb; }
.tab.active .tx { margin-left: 8px; color: #e3e6e8; }
.win-btns { width: 293px; display: grid; align-items: center; justify-items: center; grid-template-columns: 38px 78px 18px 53px 53px 53px; }
.win-btns .find { justify-self: end; margin-top: -2px; }
.win-btns .min { grid-column: 4; width: 16px; height: 2px; background: #d8dadd; margin-top: 14px; }

/* address bar */
.toolbar { height: 94px; background: #3a454f; border-bottom: 2px solid #161b20; color: #d3d8dc; }
.address { height: 50px; display: grid; align-items: center; justify-items: center; grid-template-columns: 50px 36px 52px 32px 27px 54px 18px 24px 1249px 34px 34px 38px 30px 14px 40px 42px 44px 42px; }
.nav { width: 10px; height: 18px; }
.dim { opacity: .35; }
.vbar { width: 1.500px; height: 20px; background: #aab0b6; }
.vpn { width: 32px; height: 19px; border: 1.500px solid #b6bcc1; border-radius: 2px; font-size: 12px; line-height: 16px; text-align: center; font-weight: 400; letter-spacing: .3px; }
.url { grid-column: 9; justify-self: start; font-size: 17.780px; white-space: nowrap; color: #a9b4bd; }
.url em { color: #fff; }
.bookmarks { height: 40px; padding: 0 0 1px 21px; display: grid; align-items: center; grid-template-columns: 30px 52px 30px 68px 30px 60px 30px 168px 33px 170px 30px 60px; font-size: 15.400px; letter-spacing: -.15px; white-space: nowrap; }

/* Azure DevOps header */
.page { height: 1012px; background: #ebebeb; }
.az-header {
  height: 64px;
  padding: 1px 0 0 18px;
  border-bottom: 1px solid #cfcfcf;
  display: grid;
  align-items: center;
  grid-template-columns: 60px 142px 30px 55px 30px 77px 30px 812px 266px 18px 62px 64px 64px 64px 64px;
  font-size: 17px;
  color: #7c7c7c;
  white-space: nowrap;
}
.az-header > span:nth-child(2) { letter-spacing: .3px; }
.search { height: 43px; margin-top: -1px; border: 2px solid #6a6a6a; border-radius: 2px; padding-left: 9px; display: flex; align-items: center; gap: 12px; }
.hi, .help, .me { justify-self: center; }
.me { margin-top: -1px; }
.help { width: 21px; height: 21px; border: 1.500px solid #7c7c7c; border-radius: 50%; font-size: 13px; line-height: 18px; text-align: center; }
.me { width: 43px; height: 43px; border-radius: 50%; background: #0872d0; color: #b9dbf7; display: grid; place-items: center; font-size: 16px; }

.body { display: flex; height: 948px; }

/* project rail */
.rail { width: 64px; display: flex; flex-direction: column; background: #d9d9d9; border-right: 1px solid #b5b5b5; color: #5e5e5e; }
.slot { height: 64px; display: grid; place-items: center; flex: none; }
.slot.add { height: 52px; }
.slot.on { background: #c9c9c9; border-left: 4px solid #0c72c4; padding-right: 4px; }
.rule { height: 2px; margin: 1px 14px 5px; background: #c0c0c0; }
.rule.end { margin: 0 14px; }
.grow { flex: 1; }
.proj { width: 32px; height: 32px; border-radius: 4px; background: #087e69; color: #cfe9e3; display: grid; place-items: center; font-size: 15px; }

/* hub */
.hub { width: 1803px; display: flex; flex-direction: column; }
.title-row { height: 75px; padding: 0 0 0 29px; display: grid; grid-template-columns: 41px 61px 39px 44px 1190px 187px 185px; }
.title-row > svg { align-self: center; margin-top: 2px; }
.title-row h1 { align-self: center; font-size: 22px; letter-spacing: .3px; margin-top: 2px; color: #333; }
.title-row .burn { width: 185px; height: 54px; align-self: start; margin-top: 13px; }
.title-row .chev { margin-top: 5px; color: #777; }
.dates { display: flex; flex-direction: column; padding-top: 18px; white-space: nowrap; color: #8b8b8b; }
.dates strong { font-weight: 400; font-size: 18.600px; letter-spacing: .5px; line-height: 23px; }
.dates small { font-size: 14.800px; letter-spacing: .15px; line-height: 24px; }

.command-row {
  height: 57px;
  margin: 0 27px 0 16px;
  padding: 0 0 0 14px;
  border-bottom: 1px solid #d2d2d2;
  display: grid;
  align-items: center;
  grid-template-rows: 49px;
  grid-template-columns: 110px 93px 97px 100px 108px 74px 26px 33px 158px 33px 162px 400px 33px 85px 48px 53px 53px 49px 30px;
  white-space: nowrap;
  font-size: 17px;
}
.command-row > svg { margin-top: -2px; }
.command-row .current { font-weight: 600; justify-self: start; align-self: start; height: 54px; line-height: 49px; border-bottom: 3px solid #0c72c4; margin-left: -2px; padding: 0 2px; width: 70px; font-size: 16.900px; color: #2a2a2a; }
.command-row .cmd { margin-top: -2px; font-size: 17.400px; letter-spacing: .18px; }
.split { width: 1px; height: 32px; background: #a8a8a8; }

.split-view { height: 816px; display: flex; }
.backlog { width: 1096px; padding: 6px 3px 0 27px; border-right: 1px solid #cfcfcf; }
.warning { height: 90px; background: #e8dfd9; padding: 12px 12px 0 11px; display: flex; justify-content: space-between; }
.warning p { font-size: 15.170px; line-height: 23px; white-space: nowrap; color: #3b3735; }
.warning p b { font-weight: 700; color: #222; }
.warning a { color: #1b70b5; }
.warning svg.s15 { margin-top: 2px; color: #777; }
.warn-ico { display: inline-block; width: 18px; height: 17px; margin: 0 9px -3px 0; }

.cols { height: 40px; padding-top: 1px; display: grid; align-items: center; grid-template-columns: 87px 88px 512px 133px 133px 91px; font-size: 15px; color: #7a7a7a; }
.tog { display: flex; gap: 7px; padding-left: 32px; color: #707070; }
.grid { display: flex; height: 680px; }
.rows { width: 1044px; overflow: hidden; }
.row { height: 40px; padding-bottom: 1px; display: grid; align-items: center; grid-template-columns: 87px 70px 20px 24px 485px 134px 133px 91px; white-space: nowrap; }
.row.sel { background: #dce1e9; height: 41px; margin-bottom: -1px; margin-left: 1px; padding-bottom: 2px; grid-template-columns: 86px 70px 20px 24px 485px 134px 133px 91px; }
.row.sel .t { color: #1b6db3; display: flex; align-items: center; justify-content: space-between; padding-right: 14px; }
.row.sel .more { width: 22px; height: 6px; color: #222; }
.t.wide { letter-spacing: .14px; }
.t.mid { letter-spacing: .06px; }
.add18 { width: 18px; height: 18px; margin-left: 32px; }
.wi { width: 17px; height: 19px; }
.tw { width: 6px; height: 10px; margin-left: 3px; color: #555; }
.st::before { content: ""; display: inline-block; width: 11px; height: 11px; border-radius: 50%; background: #a2a2a2; margin-right: 7px; vertical-align: 0; }
.st.committed::before { background: #0a74c4; }
.st.done::before { background: #278d2b; }

.scroll { position: relative; width: 20px; background: #dedede; color: #555; }
.arr { position: absolute; left: 5px; top: 6px; width: 10px; height: 8px; }
.arr.bottom { top: auto; bottom: 6px; }
.arr.faint { color: #a5a5a5; }
.thumb-a, .thumb-b { position: absolute; left: 0; width: 20px; background: #bdbdbd; }
.thumb-a { top: 20px; height: 598px; }
.thumb-b { top: 158px; height: 568px; }

/* work details */
.details { width: 707px; padding-left: 33px; color: #383838; font-size: 17.200px; letter-spacing: .15px; }
.details-head { height: 70px; padding: 24px 71px 0 1px; display: flex; justify-content: space-between; align-items: flex-start; }
.details-head h2 { font-size: 22.200px; line-height: 48px; font-weight: 700; color: #111; }
.details-head svg { margin-top: 15px; }
.details-body { display: flex; justify-content: space-between; padding-right: 26.500px; height: 746px; }
.groups { width: 596px; padding-top: 2px; }
.group { border-top: 1.500px solid #d2d2d2; padding-left: 14px; }
.group.first { height: 124px; }
.group h3 { height: 32px; line-height: 30px; font-size: 17.600px; font-weight: 700; color: #1b1b1b; display: flex; justify-content: space-between; padding-right: 9px; }
.caret { border: 5px solid transparent; border-top: 6px solid #111; border-bottom: 0; margin-top: 10px; }
.label { height: 28px; line-height: 32px; }
.bar { position: relative; height: 24px; width: 384.500px; background: #d7d7d7; }
.bar i { position: absolute; top: 0; height: 24px; }
.ok { background: #177617; }
.over { background: #c90f07; }
.bar .cap { width: 6px; left: 378.500px; background: #050505; }
.hours { line-height: 27px; }
.person { height: 97.400px; }
.who { height: 37px; padding: 2px 0 0 1px; display: flex; align-items: center; gap: 6px; }
.who b { width: 32px; height: 32px; border-radius: 50%; display: grid; place-items: center; font-size: 12px; font-weight: 400; color: #cfdcea; }
.who b.big { font-size: 16px; }
.c-blue { background: #0872d0; }
.c-purple { background: #341659; }
.c-dgreen { background: #07491c; }
.c-green { background: #0b7a0b; }

/* Windows taskbar */
.taskbar { height: 53px; display: grid; align-items: center; grid-template-columns: 67px 63px 49px 1636px 87px; padding-left: 18px; background: linear-gradient(90deg, #18222a, #1c1d20 60%); color: #e4e6e8; }
.apps { display: flex; gap: 3.900px; height: 51px; }
.app { position: relative; width: 61.500px; height: 51px; background: #464c50; border: 1.500px solid #7f8487; display: grid; place-items: center; }
.app.multi { width: 55.500px; margin-right: 6px; }
.app.multi::after { content: ""; position: absolute; left: 55px; top: -1.500px; width: 5px; height: 51px; background: #464c50; border: 1px solid #7f8487; border-left: 0; }
.app.focus { background: #7e8285; border-color: #d0d2d3; }
.app.focus::after { background: #7e8285; border-color: #d0d2d3; }
.skype-s { position: absolute; color: #fff; font-size: 20px; line-height: 20px; }
.tray { display: flex; flex-direction: column; align-items: center; font-size: 14.600px; line-height: 24px; letter-spacing: -.5px; color: #eee; width: 87px; padding-bottom: 3px; }
```
